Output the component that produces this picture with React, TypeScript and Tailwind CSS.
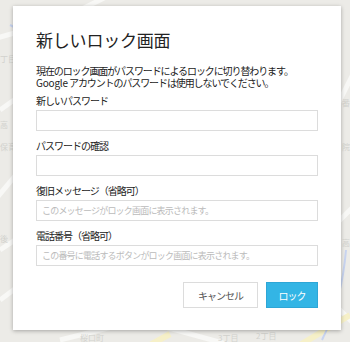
import React from "react";

const fields = [
  { label: "新しいパスワード", placeholder: "", type: "password" },
  { label: "パスワードの確認", placeholder: "", type: "password" },
  { label: "復旧メッセージ（省略可）", placeholder: "このメッセージがロック画面に表示されます。", type: "text" },
  { label: "電話番号（省略可）", placeholder: "この番号に電話するボタンがロック画面に表示されます。", type: "text" },
] as const;

function MapBackground() {
  return (
    <svg className="absolute inset-0 h-full w-full" viewBox="0 0 350 342" aria-hidden>
      <rect width="350" height="342" fill="#ecebe7" />
      <g stroke="#f8f8f6" strokeWidth="5" fill="none">
        <path d="M-10 40 L60 20 L120 -10" />
        <path d="M0 110 L14 100" />
        <path d="M-5 200 L20 170" />
        <path d="M0 250 L30 230" />
        <path d="M0 300 L20 285" />
        <path d="M330 120 L360 60" />
        <path d="M330 230 L360 200" />
        <path d="M60 340 L140 320 L230 345" />
        <path d="M330 300 L360 330" />
      </g>
      <g stroke="#f6f0c8" strokeWidth="6" fill="none">
        <path d="M300 345 L350 315" />
        <path d="M150 345 L170 334" />
      </g>
      <g stroke="#c8d4f0" strokeWidth="2" fill="none">
        <path d="M322 340 Q342 300 346 250" />
        <path d="M10 25 L40 40" />
      </g>
      <g fill="#d2d2ce" fontSize="8" fontFamily="Noto Sans CJK JP, sans-serif">
        <text x="0" y="62">丁目</text>
        <text x="0" y="128">高</text>
        <text x="0" y="150">保育</text>
        <text x="0" y="242">後</text>
        <text x="80" y="341">桜口町</text>
        <text x="218" y="341">3丁目</text>
        <text x="256" y="339">2丁目</text>
        <text x="342" y="106">番</text>
        <text x="342" y="150">院</text>
        <text x="342" y="246">高</text>
      </g>
    </svg>
  );
}

export default function App() {
  return (
    <div
      className="relative h-[342px] w-[350px] overflow-hidden"
      style={{ fontFamily: '"Noto Sans CJK JP", "Noto Sans", sans-serif' }}
    >
      <MapBackground />
      <div className="relative ml-[13px] mt-[6px] flex h-[324px] w-[328px] flex-col bg-white px-[23px] pt-[22px] shadow-[0_1px_4px_rgba(0,0,0,0.3)]">
        <h1 className="text-[17px] leading-[24px] font-normal tracking-[-0.2px] text-[#222]">新しいロック画面</h1>
        <p className="mt-[13px] text-[10px] leading-[12px] tracking-[-1.1px] text-[#222]">
          現在のロック画面がパスワードによるロックに切り替わります。
          <br />
          <span className="tracking-[-0.2px]">Google</span> アカウントのパスワードは使用しないでください。
        </p>
        <div className="mt-[5px] flex flex-col gap-[8px]">
          {fields.map((f) => (
            <label key={f.label} className="flex flex-col gap-[2px]">
              <span className="text-[10px] leading-[14px] tracking-[-1px] text-[#222]">{f.label}</span>
              <input
                type={f.type}
                placeholder={f.placeholder}
                className="h-[21px] w-full border border-[#dcdcdc] bg-white px-[5px] text-[9px] tracking-[-0.8px] text-[#222] outline-none placeholder:text-[#bbb]"
              />
            </label>
          ))}
        </div>
        <div className="mt-[16px] flex justify-end gap-[8px]">
          <button
            type="button"
            className="h-[26px] w-[75px] border border-[#dcdcdc] bg-white text-[10px] tracking-[-1px] text-[#555]"
          >
            キャンセル
          </button>
          <button
            type="button"
            className="h-[26px] w-[52px] border border-[#2ea6d6] bg-[#33b5e5] text-[10px] tracking-[-1px] text-white"
          >
            ロック
          </button>
        </div>
      </div>
    </div>
  );
}
